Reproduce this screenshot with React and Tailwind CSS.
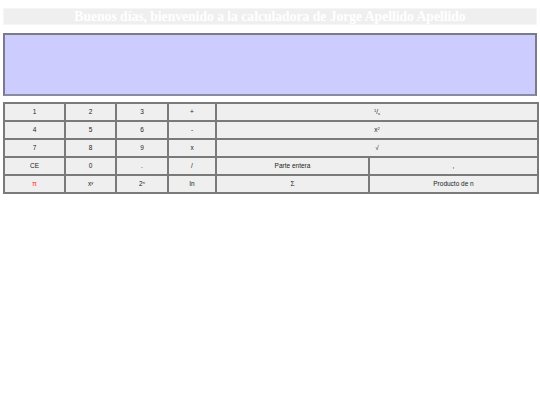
export default function App() {
  const cell = "border-2 border-[#7a7a7a] bg-[#efefef] h-[18px] p-0 text-center align-middle";
  return (
    <div className="w-[540px] h-[405px] bg-white px-[3px] pt-[8px]" style={{ fontFamily: '"Liberation Sans", Arial, sans-serif' }}>
      <div className="h-[17px] bg-[#efefef] border border-[#f6f6f6] flex items-center justify-center">
        <span className="text-white font-bold text-[13.6px] leading-none" style={{ fontFamily: '"Liberation Serif", "Times New Roman", serif' }}>
          Buenos días, bienvenido a la calculadora de Jorge Apellido Apellido
        </span>
      </div>
      <div className="mt-[8px] h-[63px] bg-[#ccccff] border-2 border-[#7a7a8a] border-b-[#8a8aa0]" />
      <table className="mt-[6px] w-[534px] border-collapse border-2 border-[#c8c8c8] text-[6.5px] text-[#222] table-fixed">
        <colgroup>
          <col className="w-[61px]" />
          <col className="w-[51px]" />
          <col className="w-[52px]" />
          <col className="w-[48px]" />
          <col className="w-[153px]" />
          <col className="w-[169px]" />
        </colgroup>
        <tbody>
          <tr>
            <td className={cell}>1</td>
            <td className={cell}>2</td>
            <td className={cell}>3</td>
            <td className={cell}>+</td>
            <td className={cell} colSpan={2}><sup className="text-[4px]">1</sup>/<sub className="text-[4px]">x</sub></td>
          </tr>
          <tr>
            <td className={cell}>4</td>
            <td className={cell}>5</td>
            <td className={cell}>6</td>
            <td className={cell}>-</td>
            <td className={cell} colSpan={2}>x<sup className="text-[4px]">2</sup></td>
          </tr>
          <tr>
            <td className={cell}>7</td>
            <td className={cell}>8</td>
            <td className={cell}>9</td>
            <td className={cell}>x</td>
            <td className={cell} colSpan={2}>√</td>
          </tr>
          <tr>
            <td className={cell}>CE</td>
            <td className={cell}>0</td>
            <td className={cell}>.</td>
            <td className={cell}>/</td>
            <td className={cell}>Parte entera</td>
            <td className={cell}>,</td>
          </tr>
          <tr>
            <td className={cell}><span className="text-[#ff3333] text-[7px]">π</span></td>
            <td className={cell}>x<sup className="text-[4px]">y</sup></td>
            <td className={cell}>2<sup className="text-[4px]">n</sup></td>
            <td className={cell}>ln</td>
            <td className={cell}>Σ</td>
            <td className={cell}>Producto de n</td>
          </tr>
        </tbody>
      </table>
    </div>
  );
}
